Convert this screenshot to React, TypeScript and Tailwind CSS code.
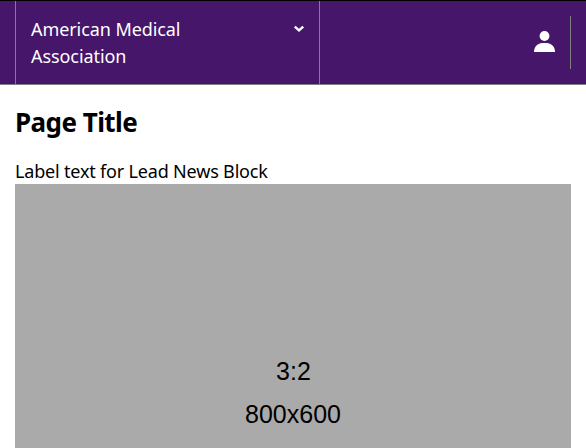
export default function App() {
  return (
    <div className="h-[448px] w-[586px] overflow-hidden bg-white font-['Noto_Sans',sans-serif] text-black">
      <header className="flex h-[85px] justify-between border-t border-b border-t-black border-b-[#808080] bg-[#46166b]">
        <button className="ml-[15px] flex w-[305px] items-start justify-between border-x border-[#808080] pt-[15px] pr-[14px] pl-[15px] text-left text-[18px] leading-[27px] tracking-[-0.08px] text-white">
          <span>American Medical<br />Association</span>
          <svg className="mt-[9px]" width="11" height="8" viewBox="0 0 11 8" fill="none" stroke="white" strokeWidth="2.4"><path d="M.8 1.7 5 5.5 9.2 1.7" /></svg>
        </button>
        <div className="mt-[15px] mr-[15px] flex h-[53px] items-start border-r border-[#808080] pt-[14px] pr-[15px]">
          <svg width="22" height="22" viewBox="0 0 22 22" fill="white"><circle cx="11.5" cy="6" r="4.9" /><path d="M1 22c0-5.4 3.8-8.9 8.5-8.9h4c4.7 0 8.5 3.5 8.5 8.9Z" /></svg>
        </div>
      </header>
      <main className="px-[15px]">
        <h1 className="pt-[19px] text-[26px] leading-[36px] font-bold tracking-[-0.55px]">Page Title</h1>
        <p className="mt-[18px] h-[26px] text-[18px] leading-[27px] tracking-[-0.18px]">Label text for Lead News Block</p>
        <div className="flex h-[417px] flex-col items-center bg-[#aaa] pt-[167px] font-['Liberation_Sans',Arial,sans-serif] text-[25px] leading-[42px]"><span className="-mt-px mb-px pl-px">3:2</span><span>800x600</span></div>
      </main>
    </div>
  );
}
